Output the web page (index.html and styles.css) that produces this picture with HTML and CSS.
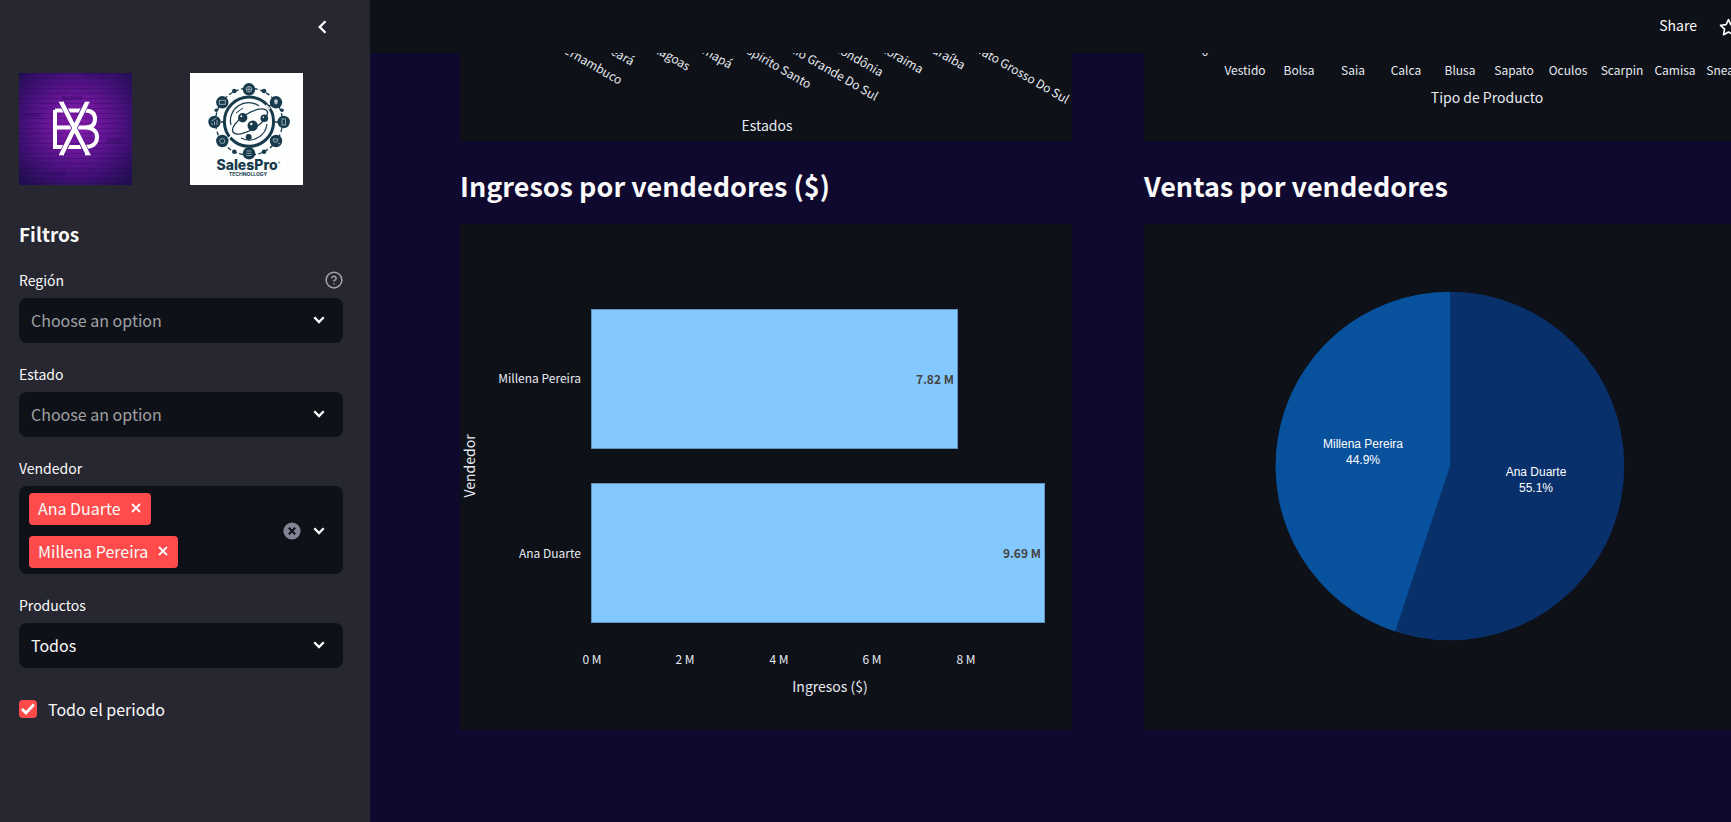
FILE: index.html
```html
<!DOCTYPE html>
<html lang="es">
<head>
<meta charset="utf-8">
<title>Ventas por vendedores</title>
<link rel="stylesheet" href="styles.css">
</head>
<body>
<div class="app">
  <aside class="sidebar">
    <div class="sidebar-top">
      <button class="icon-btn" type="button" aria-label="Cerrar panel">
        <svg width="10" height="14" viewBox="0 0 10 14"><path d="M8.5 1.2 2.7 7l5.8 5.8" fill="none" stroke="#fff" stroke-width="2.3"/></svg>
      </button>
    </div>
    <div class="logos">
      <svg class="logo" viewBox="0 0 113 112" role="img" aria-label="BX">
        <defs>
          <radialGradient id="glow" cx="50%" cy="46%" r="68%">
            <stop offset="0" stop-color="#8a1cae"/><stop offset=".35" stop-color="#6a1699"/>
            <stop offset=".7" stop-color="#421077"/><stop offset="1" stop-color="#220e52"/>
          </radialGradient>
          <pattern id="bricks" width="26" height="10" patternUnits="userSpaceOnUse">
            <path d="M0 .5h26M0 5.5h26" stroke="#1d0845" stroke-opacity=".28" stroke-width="1"/>
            <path d="M6.500 1v4M19.500 6v4" stroke="#1d0845" stroke-opacity=".12"/>
          </pattern>
        </defs>
        <rect width="113" height="112" fill="url(#glow)"/>
        <rect width="113" height="112" fill="url(#bricks)"/>
        <path d="M43 23h20v4H43zM88 66h18v4H88zM6 40h16v4H6zM24 98h24v5H24zM66 0h24v4H66z" fill="#2a0a5c" opacity=".3"/>
        <g fill="none" stroke="#fff">
          <path d="M36 37.500H66C73 37.500 76 41 76 46 76 51 73 54.500 66 54.500H36M66 54.500C75 54.500 78 59 78 64 78 70 74 74 66 74H36V37" stroke-width="4"/>
          <path d="M42.500 29 69 82M68 29 42.500 82" stroke="#5c1590" stroke-width="6"/>
          <path d="M42.500 29.500 69 81.500M68 29.500 42.500 81.500" stroke-width="4.400"/>
          <path d="M40 29.500h5M66 29.500h4.500M40 81.500h5M66 81.500h5.500" stroke-width="1.500"/>
        </g>
      </svg>
      <svg class="logo" viewBox="0 0 113 112" role="img" aria-label="SalesPro Technollogy">
        <rect width="113" height="112" fill="#fdfefe"/>
        <g fill="none" stroke="#173a4c">
          <circle cx="59" cy="48.700" r="33.500" stroke-width="1.300" stroke-dasharray="4 2.500"/>
          <circle cx="59" cy="48.700" r="24.600" stroke-width="3"/>
          <path d="M31 49h4M83 49h5M59 73v3M78 34l4-3" stroke-width="1.500"/>
          <path d="M41 52A18 18 0 0 1 69 33M77 51A18 18 0 0 1 51 65" stroke-width="1.200"/>
          <ellipse cx="60" cy="48.500" rx="20" ry="8" transform="rotate(-32 60 48.500)" stroke-width="1.300"/>
          <path d="m46 40 7-5" stroke-width="1"/>
        </g>
        <path d="m76 32 4 4M38 66l4-4" stroke="#fdfefe" stroke-width="1.500"/>
        <g fill="#173a4c">
          <circle cx="52.700" cy="44.700" r="4.700"/><circle cx="62.700" cy="52.700" r="5.200"/><circle cx="74.300" cy="45.300" r="3.800"/><circle cx="58.700" cy="64" r="3"/>
          <circle cx="59" cy="16.300" r="6.200"/><circle cx="59" cy="80.300" r="6.200"/><circle cx="24.500" cy="49" r="6.200"/><circle cx="93.700" cy="49" r="6.200"/>
          <circle cx="32.300" cy="29.300" r="6.200"/><circle cx="86" cy="29.300" r="6.200"/><circle cx="32.300" cy="68" r="6.200"/><circle cx="86" cy="68" r="6.200"/>
          <circle cx="44.300" cy="18" r="2.300"/><circle cx="74" cy="18" r="2.300"/><circle cx="44.300" cy="78.700" r="2.300"/><circle cx="74" cy="78.700" r="2.300"/>
          <circle cx="26.300" cy="37.300" r="1.800"/><circle cx="92" cy="37.300" r="1.800"/>
        </g>
        <g fill="none" stroke="#9fb1ba" stroke-width=".9">
          <circle cx="59" cy="16.300" r="2.800"/><path d="M56 16.300h6M59 13.300v6"/>
          <rect x="29.300" y="27.300" width="6" height="4"/>
          <path d="M84.500 28a1.500 1.500 0 1 1 3 0l-.7 3h-1.600z" fill="#c3d0d6"/>
          <path d="M22 52v-2M24.500 52v-3.500M27 52v-5M21.500 48l5-3"/>
          <rect x="92" y="46" width="3.500" height="6"/>
          <circle cx="32.300" cy="68" r="2.500"/>
          <path d="M83 66h5l-1 3h-3zM88 70l2 1"/>
          <path d="M56.500 78h5M56.500 80.300h5M56.500 82.500h5"/>
        </g>
        <g fill="#fff"><circle cx="51.300" cy="43.300" r="1"/><circle cx="61.300" cy="51" r="1.200"/><circle cx="73.300" cy="44.300" r=".8"/></g>
        <text class="logo-name" x="57" y="97" text-anchor="middle">SalesPro</text>
        <text class="logo-sub" x="58" y="103" text-anchor="middle">TECHNOLLOGY</text>
        <circle cx="89" cy="89.500" r=".8" fill="none" stroke="#173a4c" stroke-width=".5"/>
      </svg>
    </div>
    <h2 class="sidebar-title">Filtros</h2>
    <form class="filters">
      <div class="field">
        <div class="label-row">
          <label for="region">Región</label>
          <svg class="help" width="18" height="18" viewBox="0 0 24 24" fill="none" stroke="#a3a3a8" stroke-width="2" stroke-linecap="round" stroke-linejoin="round"><circle cx="12" cy="12" r="10.500"/><path d="M9.100 9a3 3 0 0 1 5.800 1c0 2-3 3-3 3M12 17h.01"/></svg>
        </div>
        <div class="select-wrap">
          <select id="region" class="placeholder"><option>Choose an option</option></select>
          <svg class="chev" width="12" height="8" viewBox="0 0 12 8"><path d="m1.300 1.300 4.700 4.700 4.700-4.700"/></svg>
        </div>
      </div>
      <div class="field">
        <div class="label-row"><label for="estado">Estado</label></div>
        <div class="select-wrap">
          <select id="estado" class="placeholder"><option>Choose an option</option></select>
          <svg class="chev" width="12" height="8" viewBox="0 0 12 8"><path d="m1.300 1.300 4.700 4.700 4.700-4.700"/></svg>
        </div>
      </div>
      <div class="field">
        <div class="label-row"><span id="vendedor-label">Vendedor</span></div>
        <div class="multi" role="group" aria-labelledby="vendedor-label">
          <div class="tags">
            <span class="tag">Ana Duarte<button type="button" aria-label="Quitar Ana Duarte"><svg width="10" height="10" viewBox="0 0 10 10"><path d="m1 1 8 8M9 1 1 9"/></svg></button></span>
            <span class="tag">Millena Pereira<button type="button" aria-label="Quitar Millena Pereira"><svg width="10" height="10" viewBox="0 0 10 10"><path d="m1 1 8 8M9 1 1 9"/></svg></button></span>
          </div>
          <button class="icon-btn" type="button" aria-label="Borrar todo"><svg width="18" height="18" viewBox="0 0 18 18"><circle cx="9" cy="9" r="8.600" fill="#808495"/><path d="m5.800 5.800 6.400 6.400M12.200 5.800l-6.400 6.400" stroke="#0e1117" stroke-width="2"/></svg></button>
          <button class="icon-btn" type="button" aria-label="Abrir"><svg class="chev-inline" width="12" height="8" viewBox="0 0 12 8"><path d="m1.300 1.300 4.700 4.700 4.700-4.700"/></svg></button>
        </div>
      </div>
      <div class="field">
        <div class="label-row"><label for="productos">Productos</label></div>
        <div class="select-wrap">
          <select id="productos"><option>Todos</option></select>
          <svg class="chev" width="12" height="8" viewBox="0 0 12 8"><path d="m1.300 1.300 4.700 4.700 4.700-4.700"/></svg>
        </div>
      </div>
      <label class="check"><input type="checkbox" checked><span>Todo el periodo</span></label>
    </form>
  </aside>
  <div class="content">
    <header class="toolbar">
      <button class="share" type="button">Share</button>
      <button class="icon-btn" type="button" aria-label="Favorito"><svg width="19" height="18" viewBox="0 0 19 18"><path d="m9.500 1.500 2.400 5.100 5.600.7-4.100 3.900 1.100 5.500-5-2.700-5 2.700 1.100-5.500-4.100-3.900 5.600-.7z" fill="none" stroke="#fff" stroke-width="1.600" stroke-linejoin="round"/></svg></button>
    </header>
    <main class="board">
      <section class="column">
        <svg class="chart" viewBox="0 0 612 88" role="img" aria-label="Estados">
          <g class="tick" text-anchor="end">
            <text transform="translate(159 32) rotate(30)">Pernambuco</text>
            <text transform="translate(171 13) rotate(30)">Ceará</text>
            <text transform="translate(227 18) rotate(30)">Alagoas</text>
            <text transform="translate(269 16) rotate(30)">Amapá</text>
            <text transform="translate(348 36) rotate(30)">Espírito Santo</text>
            <text transform="translate(415 48) rotate(30)">Rio Grande Do Sul</text>
            <text transform="translate(420 24) rotate(30)">Rondônia</text>
            <text transform="translate(460 21) rotate(30)">Roraima</text>
            <text transform="translate(502 17) rotate(30)">Paraíba</text>
            <text transform="translate(606 51) rotate(30)">Mato Grosso Do Sul</text>
          </g>
          <text class="axis" x="307" y="78" text-anchor="middle">Estados</text>
        </svg>
        <h3>Ingresos por vendedores ($)</h3>
        <svg class="chart" viewBox="0 0 612 506" role="img" aria-label="Ingresos por vendedores">
          <g fill="#83c9ff" stroke="#5f93bd" stroke-width="1">
            <rect x="131.500" y="85.500" width="366" height="139"/>
            <rect x="131.500" y="259.500" width="453" height="139"/>
          </g>
          <g class="tick" text-anchor="end"><text x="121" y="159">Millena Pereira</text><text x="121" y="334">Ana Duarte</text></g>
          <g class="value" text-anchor="end"><text x="494" y="160">7.82 M</text><text x="581" y="334">9.69 M</text></g>
          <g class="tick" text-anchor="middle"><text x="132" y="440">0 M</text><text x="225" y="440">2 M</text><text x="319" y="440">4 M</text><text x="412" y="440">6 M</text><text x="506" y="440">8 M</text></g>
          <text class="axis" x="370" y="468" text-anchor="middle">Ingresos ($)</text>
          <text class="axis" transform="translate(15 242) rotate(-90)" text-anchor="middle">Vendedor</text>
        </svg>
      </section>
      <section class="column">
        <svg class="chart" viewBox="0 0 612 88" role="img" aria-label="Tipo de Producto">
          <g class="tick" text-anchor="middle">
            <text x="61" y="3">0</text>
            <text x="101" y="22">Vestido</text><text x="155" y="22">Bolsa</text><text x="209" y="22">Saia</text><text x="262" y="22">Calca</text><text x="316" y="22">Blusa</text><text x="370" y="22">Sapato</text><text x="424" y="22">Oculos</text><text x="478" y="22">Scarpin</text><text x="531" y="22">Camisa</text><text x="585" y="22">Sneaker</text>
          </g>
          <text class="axis" x="343" y="50" text-anchor="middle">Tipo de Producto</text>
        </svg>
        <h3>Ventas por vendedores</h3>
        <svg class="chart" viewBox="0 0 612 506" role="img" aria-label="Ventas por vendedores">
          <circle cx="306" cy="242" r="174.300" fill="#08306b"/>
          <path d="M306 242V67.700A174.300 174.300 0 0 0 251.200 407.500Z" fill="#08519c"/>
          <g class="slice" text-anchor="middle"><text x="219" y="224">Millena Pereira</text><text x="219" y="240">44.9%</text><text x="392" y="252">Ana Duarte</text><text x="392" y="268">55.1%</text></g>
        </svg>
      </section>
    </main>
  </div>
</div>
</body>
</html>
```

FILE: styles.css
```css
* { box-sizing: border-box; }
body {
  margin: 0;
  background: #0f0930;
  color: #fafafa;
  font-family: "Noto Sans CJK SC", "Noto Sans", sans-serif;
  font-size: 16px;
  line-height: 24px;
}
button, select { font: inherit; color: inherit; }
button { border: 0; padding: 0; background: none; display: inline-flex; align-items: center; }

.app { display: flex; min-height: 100vh; overflow: hidden; }

.sidebar { flex: 0 0 370px; background: #262730; padding: 0 27px 40px 19px; }
.sidebar-top { height: 73px; padding: 20px 16px 0 0; display: flex; justify-content: flex-end; align-items: flex-start; }
.logos { display: grid; grid-template-columns: 113px 113px; gap: 58px; }
.logo { display: block; width: 100%; }
.logo-name { font: 800 14px Inter, sans-serif; fill: #173a4c; }
.logo-sub { font: 700 5px Inter, sans-serif; fill: #173a4c; }
.sidebar-title { margin: 35px 0 21px; font-size: 19px; line-height: 28px; font-weight: 600; }

.filters { display: flex; flex-direction: column; gap: 20px; }
.field { display: flex; flex-direction: column; gap: 7px; }
.label-row { display: flex; justify-content: space-between; align-items: center; font-size: 14px; line-height: 22px; }
.select-wrap { position: relative; }
select {
  display: block;
  width: 100%;
  height: 45px;
  padding: 0 40px 2px 12px;
  border: 0;
  border-radius: 8px;
  background: #0e1117;
  appearance: none;
}
select.placeholder { color: #a0a1a4; }
.chev { position: absolute; right: 18px; top: 18px; pointer-events: none; }
.chev path, .chev-inline path { fill: none; stroke: #fff; stroke-width: 2.3; }

.multi { display: flex; align-items: center; gap: 12px; padding: 7px 18px 6px 10px; border-radius: 8px; background: #0e1117; }
.tags { flex: 1; display: flex; flex-direction: column; align-items: flex-start; gap: 11px; }
.tag { display: flex; align-items: center; gap: 10px; height: 32px; padding: 0 10px 2px 9px; border-radius: 4px; background: #ff4b4b; }
.tag path { fill: none; stroke: #fff; stroke-width: 1.8; }

.check { display: flex; align-items: center; gap: 11px; margin-top: 9px; }
.check input {
  appearance: none;
  margin: 0;
  width: 18px;
  height: 18px;
  border-radius: 4px;
  background: #ff4b4b;
}
.check input:checked::before {
  content: "";
  display: block;
  width: 18px;
  height: 18px;
  background: #fff;
  clip-path: polygon(11% 56%, 22% 44%, 39% 61%, 77% 20%, 88% 31%, 39% 84%);
}

.content { flex: 1; min-width: 0; }
.toolbar { display: flex; justify-content: flex-end; align-items: center; gap: 22px; height: 53px; margin-right: -7px; background: #0e1117; }
.share { font-size: 14px; padding-bottom: 4px; }
.board { display: grid; grid-template-columns: 1fr 1fr; gap: 72px; margin: 0 -25px 0 90px; }
.chart { display: block; width: 100%; background: #0e1117; }
.column h3 { margin: 0; padding: 27px 0 20px; font-size: 27px; line-height: 36px; font-weight: 600; white-space: nowrap; }
.tick { font-size: 12px; fill: #e6eaf1; }
.axis { font-size: 14px; fill: #e6eaf1; }
.value { font-size: 12px; font-weight: 700; fill: #444; }
.slice { font: 12px "Liberation Sans", sans-serif; fill: #fff; }
```
